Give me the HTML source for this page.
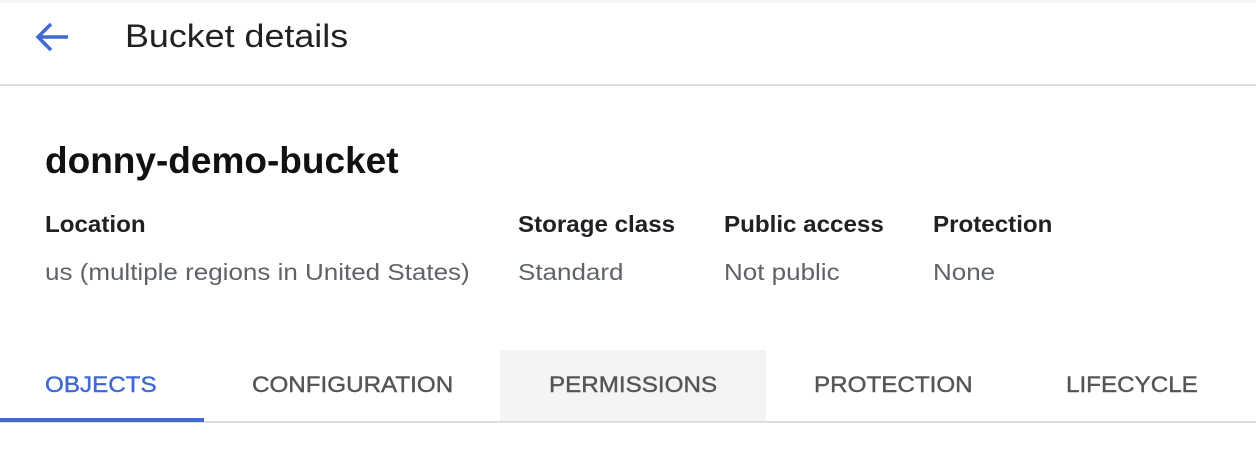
<!DOCTYPE html>
<html><head><meta charset="utf-8"><style>
*{margin:0;padding:0;box-sizing:border-box}
body{width:1256px;height:456px;background:#fff;font-family:"Liberation Sans",sans-serif;position:relative;overflow:hidden}
.a{position:absolute;white-space:nowrap}
.lab{font-size:23px;font-weight:bold;color:#202124;top:211px;transform:scaleX(1.05);transform-origin:left}
.val{font-size:23px;color:#5f6368;top:259px;transform:scaleX(1.13);transform-origin:left}
.tab{font-size:22px;color:#555;top:372px;transform:scaleX(1.1);transform-origin:left;-webkit-text-stroke:0.4px currentColor}
</style></head><body>
<div class="a" style="left:0;top:0;width:1256px;height:3px;background:#f5f5f5"></div>
<svg class="a" style="left:34px;top:20px" width="36" height="34" viewBox="0 0 36 34"><path d="M34 17H4M17 4L4 17L17 30" fill="none" stroke="#4169d4" stroke-width="3.5"/></svg>
<div class="a" style="left:125px;top:18px;font-size:32px;color:#202124;transform:scaleX(1.12);transform-origin:left">Bucket details</div>
<div class="a" style="left:0;top:84px;width:1256px;height:2px;background:#dedede"></div>
<div class="a" style="left:45px;top:140px;font-size:37px;font-weight:bold;color:#111;transform:scaleX(1.0);transform-origin:left">donny-demo-bucket</div>
<div class="a lab" style="left:45px">Location</div>
<div class="a lab" style="left:518px">Storage class</div>
<div class="a lab" style="left:724px">Public access</div>
<div class="a lab" style="left:933px">Protection</div>
<div class="a val" style="left:45px">us (multiple regions in United States)</div>
<div class="a val" style="left:518px">Standard</div>
<div class="a val" style="left:724px">Not public</div>
<div class="a val" style="left:933px">None</div>
<div class="a" style="left:500px;top:350px;width:266px;height:71px;background:#f4f4f4"></div>
<div class="a tab" style="left:45px;color:#4169d4">OBJECTS</div>
<div class="a tab" style="left:252px">CONFIGURATION</div>
<div class="a tab" style="left:549px">PERMISSIONS</div>
<div class="a tab" style="left:814px">PROTECTION</div>
<div class="a tab" style="left:1066px">LIFECYCLE</div>
<div class="a" style="left:0;top:421px;width:1256px;height:2px;background:#dedede"></div>
<div class="a" style="left:0;top:418px;width:204px;height:4px;background:#4169d4"></div>
</body></html>
